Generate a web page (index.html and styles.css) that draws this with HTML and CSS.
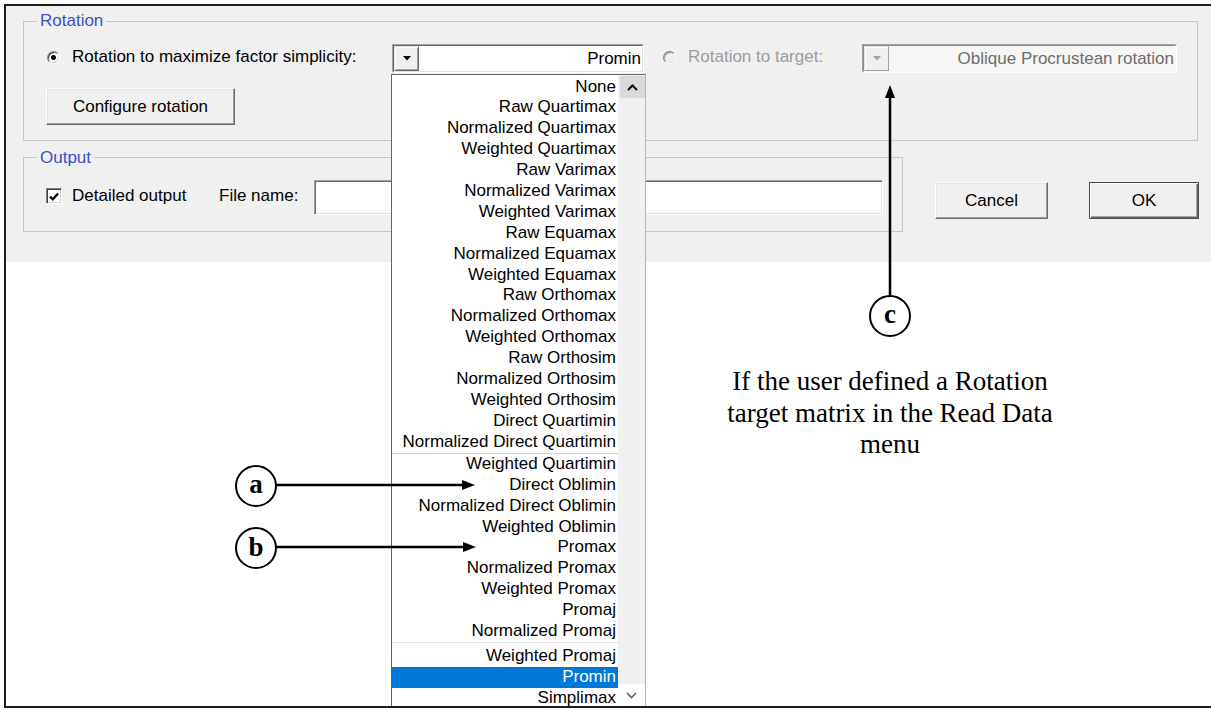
FILE: index.html
```html
<!DOCTYPE html>
<html lang="en">
<head>
<meta charset="utf-8">
<title>Rotation settings</title>
<link rel="stylesheet" href="styles.css">
</head>
<body>
<div class="frame">
  <div class="dialog">
    <fieldset class="group group-rotation">
      <legend>Rotation</legend>
      <div class="group-body">
        <div class="row row-rotation">
          <label class="opt opt-simplicity"><span class="radio checked"></span><span>Rotation to maximize factor simplicity:</span></label>
          <div class="combo combo-method">
            <div class="combo-inner">
              <span class="combo-btn"><svg width="8" height="5" viewBox="0 0 8 5"><polygon points="0,0 8,0 4,4.5" fill="#000"/></svg></span>
              <span class="combo-value">Promin</span>
            </div>
          </div>
          <label class="opt opt-target disabled"><span class="radio"></span><span>Rotation to target:</span></label>
          <div class="combo combo-target disabled">
            <div class="combo-inner">
              <span class="combo-btn"><svg width="8" height="5" viewBox="0 0 8 5"><polygon points="0,0 8,0 4,4.5" fill="#a0a0a0"/></svg></span>
              <span class="combo-value">Oblique Procrustean rotation</span>
            </div>
          </div>
        </div>
        <button class="btn btn-configure" type="button">Configure rotation</button>
      </div>
    </fieldset>
    <div class="row-bottom">
      <fieldset class="group group-output">
        <legend>Output</legend>
        <div class="group-body">
          <div class="row row-output">
            <label class="opt opt-detail"><span class="check"><svg width="10" height="9" viewBox="0 0 10 9"><path d="M1 4.5 L3.8 7.3 L9 1.5" fill="none" stroke="#000" stroke-width="2.2"/></svg></span><span>Detailed output</span></label>
            <span class="field-label">File name:</span>
            <span class="textbox"></span>
          </div>
        </div>
      </fieldset>
      <div class="actions">
        <button class="btn btn-cancel" type="button">Cancel</button>
        <button class="btn btn-ok btn-default" type="button">OK</button>
      </div>
    </div>
  </div>

  <div class="dropdown">
    <ul class="list">
      <li>None</li>
      <li>Raw Quartimax</li>
      <li>Normalized Quartimax</li>
      <li>Weighted Quartimax</li>
      <li>Raw Varimax</li>
      <li>Normalized Varimax</li>
      <li>Weighted Varimax</li>
      <li>Raw Equamax</li>
      <li>Normalized Equamax</li>
      <li>Weighted Equamax</li>
      <li>Raw Orthomax</li>
      <li>Normalized Orthomax</li>
      <li>Weighted Orthomax</li>
      <li>Raw Orthosim</li>
      <li>Normalized Orthosim</li>
      <li>Weighted Orthosim</li>
      <li>Direct Quartimin</li>
      <li>Normalized Direct Quartimin</li>
      <li class="sep sep-thin" role="separator"></li>
      <li>Weighted Quartimin</li>
      <li>Direct Oblimin</li>
      <li>Normalized Direct Oblimin</li>
      <li>Weighted Oblimin</li>
      <li>Promax</li>
      <li>Normalized Promax</li>
      <li>Weighted Promax</li>
      <li>Promaj</li>
      <li>Normalized Promaj</li>
      <li class="sep sep-wide" role="separator"></li>
      <li>Weighted Promaj</li>
      <li class="selected">Promin</li>
      <li>Simplimax</li>
    </ul>
    <div class="scroll">
      <span class="scroll-up"><svg width="11" height="7" viewBox="0 0 11 7"><polyline points="1,6 5.5,1.5 10,6" fill="none" stroke="#000" stroke-width="2"/></svg></span>
      <span class="scroll-down"><svg width="11" height="7" viewBox="0 0 11 7"><polyline points="1,1 5.5,5.5 10,1" fill="none" stroke="#606060" stroke-width="1.6"/></svg></span>
    </div>
  </div>

  <svg class="callouts" width="1205" height="700" viewBox="6 6 1205 700">
    <g fill="#000" stroke="#000">
      <line x1="276" y1="485" x2="465" y2="485" stroke-width="2.5"/>
      <polygon points="462,480 475,485 462,490" stroke="none"/>
      <line x1="276" y1="547" x2="466" y2="547" stroke-width="2.5"/>
      <polygon points="463,542 476,547 463,552" stroke="none"/>
      <line x1="890" y1="296" x2="890" y2="96" stroke-width="2.5"/>
      <polygon points="885,98 890,85 895,98" stroke="none"/>
    </g>
    <g fill="#fff" stroke="#000" stroke-width="2">
      <circle cx="256" cy="486" r="20"/>
      <circle cx="256" cy="548" r="20"/>
      <circle cx="890" cy="316" r="20"/>
    </g>
    <g class="callout-letter" text-anchor="middle">
      <text x="256" y="493">a</text>
      <text x="256" y="556">b</text>
      <text x="890" y="323">c</text>
    </g>
  </svg>

  <p class="note">If the user defined a Rotation target matrix in the Read Data menu</p>
</div>
</body>
</html>
```

FILE: styles.css
```css
* {
  box-sizing: border-box;
}

html,
body {
  margin: 0;
  padding: 0;
  background: #fff;
}

body {
  width: 1211px;
  height: 710px;
  overflow: hidden;
  font-family: "Liberation Sans", Arial, sans-serif;
  font-size: 17px;
  color: #000;
}

/* outer picture frame */
.frame {
  position: relative;
  margin: 4px 0 0 4px;
  width: 1207px;
  height: 704px;
  border: 2px solid #1e1e1e;
  border-right: 0;
  overflow: hidden;
}

/* ---------- dialog ---------- */
.dialog {
  height: 256px;
  background: #f0f0f0;
  padding: 5px 13px 0 17px;
}

.group {
  margin: 0;
  padding: 0;
  min-width: 0;
  border: 1px solid #c6c6c6;
}

.group legend {
  margin-left: 13px;
  padding: 0 3px;
  font-size: 17px;
  line-height: 20px;
  color: #3d51c9;
}

.group-rotation .group-body {
  padding: 13px 0 15px 22px;
}

.group-output legend {
  padding-top: 1px;
}

.row {
  display: flex;
  align-items: center;
}

.row-rotation {
  height: 29px;
}

.opt {
  display: flex;
  align-items: center;
  gap: 12px;
  white-space: nowrap;
  padding-bottom: 3px;
}

.opt.disabled {
  color: #9c9c9c;
}

.opt-simplicity {
  width: 346px;
  padding-left: 1px;
}

.opt-target {
  width: 199px;
  margin-left: 19px;
}

/* radio buttons and check box, classic sunken look */
.radio {
  flex: none;
  width: 13px;
  height: 13px;
  border-radius: 50%;
  border: 1px solid;
  border-color: #808080 #fff #fff #808080;
  box-shadow: inset 1px 1px 0 #404040, inset -1px -1px 0 #d4d4d4;
  background: #fff;
}

.radio.checked {
  background: radial-gradient(circle, #000 0 2.1px, #fff 2.9px);
}

.opt.disabled .radio {
  background: #f0f0f0;
  box-shadow: inset 1px 1px 0 #a0a0a0, inset -1px -1px 0 #e3e3e3;
}

.check {
  flex: none;
  width: 16px;
  height: 16px;
  display: flex;
  align-items: center;
  justify-content: center;
  background: #fff;
  border: 1px solid;
  border-color: #808080 #fff #fff #808080;
  box-shadow: inset 1px 1px 0 #404040, inset -1px -1px 0 #d4d4d4;
}

.opt-detail {
  width: 173px;
  gap: 10px;
}

/* combo boxes */
.combo {
  flex: none;
  height: 29px;
  display: flex;
  border: 1px solid;
  border-color: #a0a0a0 #fff #fff #a0a0a0;
  background: #fff;
}

.combo-method {
  width: 252px;
}

.combo-target {
  width: 315px;
}

.combo-inner {
  flex: 1;
  display: flex;
  border: 1px solid;
  border-color: #696969 #e3e3e3 #e3e3e3 #696969;
}

.combo-btn {
  flex: none;
  width: 25px;
  display: flex;
  align-items: center;
  justify-content: center;
  background: #f0f0f0;
  border: 1px solid;
  border-color: #e3e3e3 #696969 #696969 #e3e3e3;
  box-shadow: inset 1px 1px 0 #fff, inset -1px -1px 0 #a0a0a0;
}

.combo-value {
  flex: 1;
  text-align: right;
  padding-right: 1px;
  line-height: 25px;
  white-space: nowrap;
}

.combo.disabled {
  background: #f6f6f6;
}

.combo.disabled .combo-inner {
  border-color: #8a8a8a #f6f6f6 #f6f6f6 #8a8a8a;
}

.combo.disabled .combo-btn {
  border-color: #e3e3e3 #a0a0a0 #a0a0a0 #e3e3e3;
  box-shadow: inset 1px 1px 0 #fff;
}

.combo.disabled .combo-value {
  color: #6d6d6d;
}

/* push buttons */
.btn {
  height: 37px;
  padding: 0;
  font: inherit;
  color: #000;
  background: #f0f0f0;
  border: 1px solid;
  border-color: #fff #696969 #696969 #fff;
  box-shadow: inset -1px -1px 0 #a0a0a0, inset 1px 1px 0 #e3e3e3;
}

.btn-configure {
  display: block;
  width: 189px;
  margin-top: 15px;
}

.btn-default {
  border: 1px solid #4a4a4a;
  box-shadow: inset 1px 1px 0 #fff, inset -1px -1px 0 #696969, inset -2px -2px 0 #a0a0a0;
}

.btn-cancel {
  width: 113px;
}

.btn-ok {
  width: 110px;
}

/* bottom row: output group + dialog buttons */
.row-bottom {
  display: flex;
  align-items: flex-start;
  margin-top: 6px;
}

.group-output {
  width: 880px;
  flex: none;
}

.group-output .group-body {
  padding: 12px 0 16px 22px;
}

.row-output {
  height: 35px;
}

.field-label {
  width: 95px;
  white-space: nowrap;
  padding-bottom: 3px;
}

.textbox {
  width: 569px;
  height: 35px;
  background: #fff;
  border: 1px solid;
  border-color: #a0a0a0 #fff #fff #a0a0a0;
  box-shadow: inset 1px 1px 0 #696969, inset -1px -1px 0 #e3e3e3;
}

.actions {
  display: flex;
  gap: 41px;
  margin: 35px 0 0 32px;
}

/* ---------- open drop-down list ---------- */
.dropdown {
  position: absolute;
  left: 385px;
  top: 68px;
  bottom: 0;
  width: 255px;
  display: flex;
  background: #fff;
  border: 1px solid #646464;
  border-right-color: #b4b4b4;
  border-bottom: 0;
  overflow: hidden;
}

.list {
  flex: none;
  width: 226px;
  margin: 0;
  padding: 1.5px 0 0;
  list-style: none;
}

.list li {
  height: 20.9px;
  line-height: 20.9px;
  padding-right: 2px;
  text-align: right;
  white-space: nowrap;
}

.list li.selected {
  background: #0078d7;
  color: #fff;
}

.list li.sep {
  height: 1.3px;
  border-top: 1px solid #d2d2d2;
}

.list li.sep-wide {
  height: 4.5px;
  border-top-color: #e2e2e2;
}

.scroll {
  flex: 1;
  display: flex;
  flex-direction: column;
  background: #f0f0f0;
}

.scroll-up {
  height: 22px;
  margin: 1px 0 0 2px;
  display: flex;
  align-items: center;
  justify-content: center;
  background: #dadada;
}

.scroll-down {
  height: 22px;
  margin-top: auto;
  display: flex;
  align-items: center;
  justify-content: center;
  background: #fff;
}

/* ---------- callouts ---------- */
.callouts {
  position: absolute;
  left: 0;
  top: 0;
}

.callout-letter {
  font-family: "Liberation Serif", "Times New Roman", serif;
  font-weight: bold;
  font-size: 27px;
  fill: #000;
}

.note {
  position: absolute;
  left: 714px;
  top: 360px;
  width: 340px;
  margin: 0;
  text-align: center;
  font-family: "Liberation Serif", "Times New Roman", serif;
  font-size: 27px;
  line-height: 31.5px;
  color: #000;
}
```
